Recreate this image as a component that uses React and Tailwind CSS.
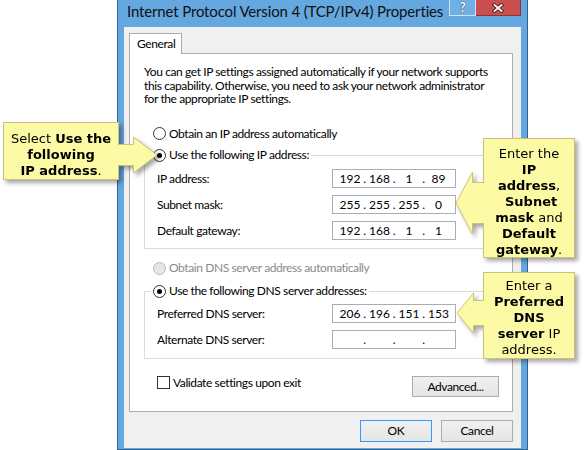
import React from 'react';

// Win8 style radio button
const Radio = ({ checked, disabled }) => (
  <span
    className={
      disabled
        ? 'w-[13px] h-[13px] shrink-0 rounded-full border border-[#bcbcbc] bg-[#e6e6e6]'
        : 'w-[13px] h-[13px] shrink-0 rounded-full border border-[#333333] bg-white flex items-center justify-center'
    }
  >
    {checked && <span className="w-[5px] h-[5px] rounded-full bg-black" />}
  </span>
);

// IP address box with four octets
const IpField = ({ parts }) => (
  <div className="w-[124px] h-[19px] flex items-center pl-[6px] border border-[#abadb3] bg-white leading-none tracking-normal">
    {parts.map((p, i) => (
      <React.Fragment key={i}>
        <span className="w-[22px] text-center">{p}</span>
        {i < 3 && <span className="w-[7.5px] text-center">.</span>}
      </React.Fragment>
    ))}
  </div>
);

const FieldRow = ({ label, parts }) => (
  <div className="flex items-center pl-[12px] h-[19px]">
    <span className="w-[175px]">{label}</span>
    <IpField parts={parts} />
  </div>
);

const Button = ({ children, className }) => (
  <div
    className={`flex items-center justify-center border bg-gradient-to-b from-[#f0f0f0] to-[#e5e5e5] ${className}`}
  >
    {children}
  </div>
);

const calloutText = "font-['DejaVu_Sans',sans-serif] text-[13px] leading-[16px] tracking-normal text-black text-center";

export default function App() {
  const empty = ['', '', '', ''];

  return (
    <div className="relative w-[584px] h-[450px] overflow-hidden bg-white font-['Lato',sans-serif] text-[12px] tracking-[-0.4px] text-black">
      {/* Dialog window */}
      <div className="ml-[117px] w-[411px] h-[450px] flex flex-col bg-[#65a7df] border-x border-b border-[#30628f]">
        {/* Title bar */}
        <div className="h-[27px] shrink-0 flex items-start">
          <div className="flex-1 min-w-0 pl-[9px] pt-[1px] text-[15px] leading-[20px] tracking-[-0.15px] text-[#111111] whitespace-nowrap overflow-hidden">
            Internet Protocol Version 4 (TCP/IPv4) Properties
          </div>
          <div className="shrink-0 mr-[6px] flex">
            <div className="w-[27px] h-[16px] flex items-center justify-center border border-t-0 border-[#cfe3f7] bg-[#6fb0e6] text-white font-bold text-[13px] leading-none [text-shadow:0_0_1px_#1d3d5c,0_0_1px_#1d3d5c]">
              ?
            </div>
            <div className="w-[45px] h-[16px] flex items-center justify-center border border-t-0 border-l-0 border-[#8e3434] bg-[#c94f4f]">
              <svg width="12" height="10" viewBox="0 0 12 10">
                <path d="M2.5 2 L9.5 8 M9.5 2 L2.5 8" stroke="#4a1a1a" strokeWidth="3.6" strokeLinecap="square" />
                <path d="M2.5 2 L9.5 8 M9.5 2 L2.5 8" stroke="#ffffff" strokeWidth="1.8" strokeLinecap="square" />
              </svg>
            </div>
          </div>
        </div>

        {/* Client area */}
        <div className="mx-[6px] mb-[1px] flex-1 bg-[#f0f0f0] pt-[6px] pl-[5px] pr-[8px]">
          <div className="relative w-[53px] h-[21px] -mb-px pl-[7px] leading-[20px] border border-b-0 border-[#adadad] bg-white">
            General
          </div>

          <div className="h-[359px] border border-[#adadad] bg-white pl-[14px] pr-[13px]">
            <p className="mt-[11px] leading-[13.5px] whitespace-nowrap">
              You can get IP settings assigned automatically if your network supports
              <br />
              this capability. Otherwise, you need to ask your network administrator
              <br />
              for the appropriate IP settings.
            </p>

            <div className="mt-[20px] h-[16px] ml-[9px] flex items-center gap-[3px]">
              <Radio />
              <span>Obtain an IP address automatically</span>
            </div>

            {/* IP group */}
            <div className="mt-[13.5px] border border-[#dcdcdc] pb-[8px]">
              <div className="-mt-[9px] ml-[6px] h-[16px] w-fit px-[2px] flex items-center gap-[3px] bg-white">
                <Radio checked />
                <span>Use the following IP address:</span>
              </div>
              <div className="mt-[6px] flex flex-col gap-[7px]">
                <FieldRow label="IP address:" parts={['192', '168', '1', '89']} />
                <FieldRow label="Subnet mask:" parts={['255', '255', '255', '0']} />
                <FieldRow label="Default gateway:" parts={['192', '168', '1', '1']} />
              </div>
            </div>

            <div className="mt-[11px] h-[16px] ml-[9px] flex items-center gap-[3px] text-[#8a8a8a]">
              <Radio disabled />
              <span>Obtain DNS server address automatically</span>
            </div>

            {/* DNS group */}
            <div className="mt-[15px] border border-[#dcdcdc] pb-[9px]">
              <div className="-mt-[9px] ml-[6px] h-[16px] w-fit px-[2px] flex items-center gap-[3px] bg-white">
                <Radio checked />
                <span>Use the following DNS server addresses:</span>
              </div>
              <div className="mt-[5px] flex flex-col gap-[7px]">
                <FieldRow label="Preferred DNS server:" parts={['206', '196', '151', '153']} />
                <FieldRow label="Alternate DNS server:" parts={empty} />
              </div>
            </div>

            <div className="mt-[17px] flex justify-between items-start">
              <div className="ml-[13px] h-[13px] flex items-center gap-[3px]">
                <span className="w-[13px] h-[13px] border border-[#333333] bg-white" />
                <span>Validate settings upon exit</span>
              </div>
              <Button className="w-[87px] h-[21px] border-[#acacac]">Advanced...</Button>
            </div>
          </div>

          <div className="mt-[8px] flex justify-end gap-[9px]">
            <Button className="w-[72px] h-[22px] border-[#3399ff]">OK</Button>
            <Button className="w-[72px] h-[22px] border-[#acacac]">Cancel</Button>
          </div>
        </div>
      </div>

      {/* Callout: select option */}
      <div className="absolute left-0 top-0 z-20 drop-shadow-[3px_3px_2px_rgba(0,0,0,0.35)]">
        <div className={`absolute left-[3px] top-[122px] w-[116px] h-[58px] pt-[8px] border border-[#c9c27e] bg-[#fdfaa6] ${calloutText} leading-[16.5px]`}>
          <div>Select <b>Use the</b></div>
          <div><b>following</b></div>
          <div><b>IP address</b>.</div>
        </div>
        <svg className="absolute left-[117px] top-[130px]" width="44" height="50" viewBox="0 0 44 50">
          <polygon points="1,14 16,14 16,7 40,25 16,43 16,36 1,36" fill="#fdfaa6" />
          <polyline points="1,14.5 16.5,14.5 16.5,7 40,25 16.5,43 16.5,35.5 1,35.5" fill="none" stroke="#c9c27e" strokeWidth="1" />
        </svg>
      </div>

      {/* Callout: IP, mask, gateway */}
      <div className="absolute left-0 top-0 z-20 drop-shadow-[3px_3px_2px_rgba(0,0,0,0.35)]">
        <div className={`absolute left-[483px] top-[138px] w-[92px] h-[120px] pt-[6.5px] border border-[#c9c27e] bg-[#fdfaa6] ${calloutText}`}>
          <div>Enter the</div>
          <div><b>IP</b></div>
          <div><b>address</b>,</div>
          <div>{'\u00a0'}<b>Subnet</b></div>
          <div><b>mask</b> and</div>
          <div><b>Default</b></div>
          <div><b>gateway</b>.</div>
        </div>
        <svg className="absolute left-[450px] top-[165px]" width="36" height="75" viewBox="0 0 36 75">
          <polygon points="34,17 22,17 22,7 6,38 22,69 22,59 34,59" fill="#fdfaa6" />
          <polyline points="34,17.5 22.5,17.5 22.5,7 6,38 22.5,69 22.5,58.5 34,58.5" fill="none" stroke="#c9c27e" strokeWidth="1" />
        </svg>
      </div>

      {/* Callout: preferred DNS */}
      <div className="absolute left-0 top-0 z-20 drop-shadow-[3px_3px_2px_rgba(0,0,0,0.35)]">
        <div className={`absolute left-[483px] top-[272px] w-[92px] h-[87px] pt-[5px] border border-[#c9c27e] bg-[#fdfaa6] ${calloutText}`}>
          <div>Enter a</div>
          <div><b>Preferred</b></div>
          <div><b>DNS</b></div>
          <div><b>server</b> IP</div>
          <div>address.</div>
        </div>
        <svg className="absolute left-[450px] top-[285px]" width="36" height="55" viewBox="0 0 36 55">
          <polygon points="34,15 23,15 23,8 7,28 23,48 23,41 34,41" fill="#fdfaa6" />
          <polyline points="34,15.5 23.5,15.5 23.5,8 7,28 23.5,48 23.5,40.5 34,40.5" fill="none" stroke="#c9c27e" strokeWidth="1" />
        </svg>
      </div>
    </div>
  );
}
